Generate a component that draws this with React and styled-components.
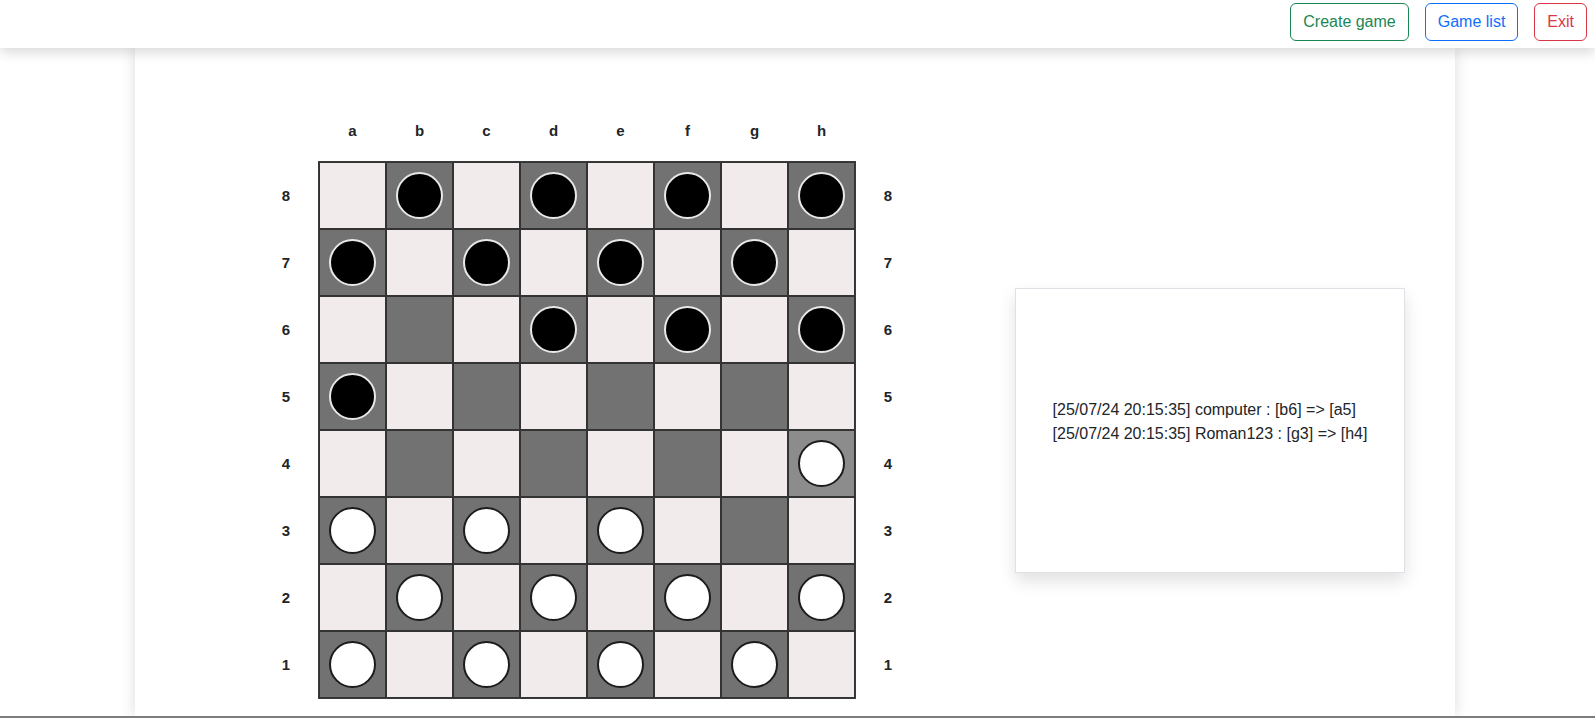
import React from "react";
import styled, { createGlobalStyle } from "styled-components";

const GlobalStyle = createGlobalStyle`
  *, *::before, *::after { box-sizing: border-box; }
  body {
    margin: 0;
    background: #fff;
    font-family: "Liberation Sans", Arial, sans-serif;
    color: #212529;
  }
`;

const COLS = ["a", "b", "c", "d", "e", "f", "g", "h"];
const ROWS = [8, 7, 6, 5, 4, 3, 2, 1];

// piece layout: b = black, w = white
const PIECES = {
  b8: "b", d8: "b", f8: "b", h8: "b",
  a7: "b", c7: "b", e7: "b", g7: "b",
  d6: "b", f6: "b", h6: "b",
  a5: "b",
  h4: "w",
  a3: "w", c3: "w", e3: "w",
  b2: "w", d2: "w", f2: "w", h2: "w",
  a1: "w", c1: "w", e1: "w", g1: "w",
};

const LAST_MOVE = "h4";

const LOG = [
  "[25/07/24 20:15:35] computer : [b6] => [a5]",
  "[25/07/24 20:15:35] Roman123 : [g3] => [h4]",
];

const Page = () => (
  <Wrapper>
    <GlobalStyle />
    <Header>
      <NavButton $color="#198754">Create game</NavButton>
      <NavButton $color="#0d6efd">Game list</NavButton>
      <NavButton $color="#dc3545">Exit</NavButton>
    </Header>
    <Main>
      <Content>
        <BoardArea>
          <ColLabels>
            {COLS.map((c) => (
              <ColLabel key={c}>{c}</ColLabel>
            ))}
          </ColLabels>
          <BoardRow>
            <RowLabels>
              {ROWS.map((r) => (
                <RowLabel key={r}>{r}</RowLabel>
              ))}
            </RowLabels>
            <Board>
              {ROWS.map((r) =>
                COLS.map((c, ci) => {
                  const id = `${c}${r}`;
                  const dark = (ci + r) % 2 === 1;
                  const piece = PIECES[id];
                  return (
                    <Cell key={id} $dark={dark} $active={id === LAST_MOVE}>
                      {piece && <Piece $black={piece === "b"} />}
                    </Cell>
                  );
                })
              )}
            </Board>
            <RowLabels>
              {ROWS.map((r) => (
                <RowLabel key={r}>{r}</RowLabel>
              ))}
            </RowLabels>
          </BoardRow>
        </BoardArea>
        <LogPanel>
          <LogText>
            {LOG.map((line, i) => (
              <div key={i}>{line}</div>
            ))}
          </LogText>
        </LogPanel>
      </Content>
    </Main>
    <FooterLine />
  </Wrapper>
);

export default Page;

const Wrapper = styled.div`
  min-height: 100vh;
  display: flex;
  flex-direction: column;
`;

const Header = styled.header`
  position: relative;
  z-index: 2;
  height: 48px;
  background: #fff;
  display: flex;
  justify-content: flex-end;
  align-items: flex-start;
  gap: 16px;
  padding: 3px 8px 0 0;
  box-shadow: 0 4px 12px rgba(0, 0, 0, 0.16);
`;

const NavButton = styled.button`
  font-family: "Liberation Sans", Arial, sans-serif;
  font-size: 16px;
  line-height: 24px;
  padding: 6px 12px;
  background: transparent;
  color: ${(p) => p.$color};
  border: 1px solid ${(p) => p.$color};
  border-radius: 6px;
  cursor: pointer;
`;

const Main = styled.main`
  flex: 1;
  width: 1320px;
  margin: 0 0 0 135px;
  background: #fff;
  box-shadow: 0 0 14px rgba(0, 0, 0, 0.14);
`;

const Content = styled.div`
  display: flex;
  align-items: center;
  padding: 51px 0 0 119px;
`;

const BoardArea = styled.div`
  display: flex;
  flex-direction: column;
`;

const ColLabels = styled.div`
  display: grid;
  grid-template-columns: repeat(8, 67px);
  height: 62px;
  margin-left: 65px;
`;

const ColLabel = styled.div`
  display: flex;
  align-items: center;
  justify-content: center;
  font-weight: 700;
  font-size: 15px;
  color: #212529;
`;

const BoardRow = styled.div`
  display: flex;
`;

const RowLabels = styled.div`
  width: 64px;
  display: flex;
  flex-direction: column;
  padding-top: 1px;
`;

const RowLabel = styled.div`
  height: 67px;
  display: flex;
  align-items: center;
  justify-content: center;
  font-weight: 700;
  font-size: 15px;
  color: #212529;
`;

const Board = styled.div`
  display: grid;
  grid-template-columns: repeat(8, 67px);
  grid-template-rows: repeat(8, 67px);
  border: 1px solid #3a3a3a;
  background: #737373;
`;

const Cell = styled.div`
  display: flex;
  align-items: center;
  justify-content: center;
  border: 1px solid #333;
  background: ${(p) => (p.$active ? "#8c8c8c" : p.$dark ? "#727272" : "#f1ebeb")};
`;

const Piece = styled.div`
  width: 47px;
  height: 47px;
  border-radius: 50%;
  background: ${(p) => (p.$black ? "#000" : "#fff")};
  border: 2px solid ${(p) => (p.$black ? "#e8e8e8" : "#1c1c1c")};
`;

const LogPanel = styled.div`
  width: 390px;
  height: 285px;
  margin: 62px 0 0 95px;
  border: 1px solid #dee2e6;
  background: #fff;
  box-shadow: 0 8px 16px rgba(0, 0, 0, 0.12);
  display: flex;
  align-items: center;
  justify-content: center;
`;

const LogText = styled.div`
  font-size: 16px;
  line-height: 24px;
  margin-bottom: 16px;
  white-space: nowrap;
`;

const FooterLine = styled.div`
  height: 2px;
  background: #7d7d7d;
`;
